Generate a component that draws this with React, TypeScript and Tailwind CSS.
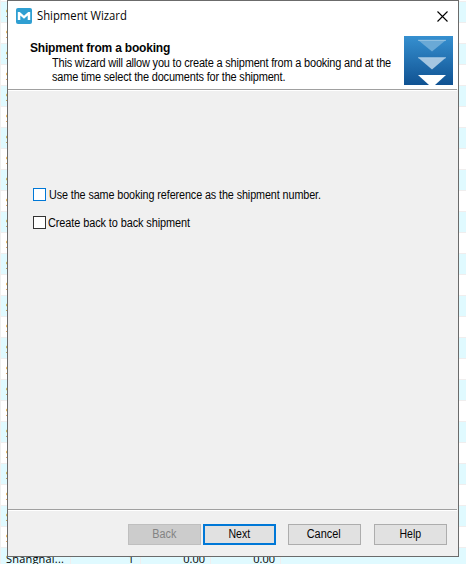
import React from "react";

const rows = Array.from({ length: 27 }, (_, i) => i);

function Grid() {
  return (
    <div className="flex h-[564px] w-[466px] flex-col overflow-hidden border-l border-[#f0f0f0] bg-white pt-px font-['Open_Sans','Noto_Sans',sans-serif] text-[11px] text-black">
      {rows.map((i) => (
        <div
          key={i}
          className={`flex h-[21px] shrink-0 border-t border-[#f0eeee] leading-[21px] ${i % 2 === 0 ? "bg-[#e0faff]" : "bg-white"}`}
        >
          <div className="w-[70px] shrink-0 border-r border-[#f0eeee] pl-[5px] tracking-[0.2px]">{i === 26 ? "Shanghai..." : "S"}</div>
          <div className="w-[70px] shrink-0 border-r border-[#f0eeee] pr-[6px] text-right">{i === 26 && "1"}</div>
          <div className="w-[70px] shrink-0 border-r border-[#f0eeee] pr-[5px] text-right">{i === 26 && "0.00"}</div>
          <div className="w-[70px] shrink-0 border-r border-[#f0eeee] pr-[5px] text-right">{i === 26 && "0.00"}</div>
        </div>
      ))}
    </div>
  );
}

function Separator() {
  return <div className="mr-px h-[2px] shrink-0 border-t border-[#a0a0a0] bg-white" />;
}

function Logo() {
  return (
    <svg width="16" height="16" viewBox="0 0 16 16" className="shrink-0">
      <rect width="16" height="16" rx="2" fill="#2f9fd2" />
      <path d="M1.8 12V4H3.8L8 7.7L12.2 4H14.2V12H11.7V7.6L8 10.8L4.3 7.6V12Z" fill="#fff" />
    </svg>
  );
}

function Banner() {
  return (
    <svg width="49" height="49" viewBox="0 0 49 49" className="shrink-0">
      <defs>
        <linearGradient id="banner" x1="0" y1="0" x2="0" y2="1">
          <stop offset="0" stopColor="#3690d0" />
          <stop offset="1" stopColor="#105292" />
        </linearGradient>
      </defs>
      <rect width="49" height="49" fill="url(#banner)" />
      <path d="M14 4H42L28 15.5Z" fill="#6aa9d6" />
      <path d="M14 21.5H42L28 33.5Z" fill="#a5c6e1" />
      <path d="M14 39H42L31 49H25Z" fill="#fff" />
      <path d="M14 4.3H42M14 21.8H42" stroke="#b9d6ec" strokeWidth="0.6" />
    </svg>
  );
}

export default function App() {
  return (
    <div className="relative h-[564px] w-[466px] overflow-hidden font-['Liberation_Sans',Arial,sans-serif] text-[12px] text-[#050505]">
      <Grid />
      <div className="absolute top-0 left-[7px] flex h-[557px] w-[452px] flex-col border border-[#6b6b6b] bg-[#f0f0f0]">
        <div className="flex h-[88px] shrink-0 flex-col bg-white">
          <div className="flex h-[30px] shrink-0 items-center pr-[10px] pl-2">
            <Logo />
            <span className="ml-[5px] flex-1 origin-left scale-x-[0.94] whitespace-nowrap font-['Open_Sans','Noto_Sans',sans-serif] text-[12px] leading-4">Shipment Wizard</span>
            <svg width="11" height="11" viewBox="0 0 11 11" stroke="#000" strokeWidth="1.1">
              <path d="M0.5 0.5L10.5 10.5M10.5 0.5L0.5 10.5" />
            </svg>
          </div>
          <div className="flex pt-[5px] pr-[5px] pl-[22px]">
            <div className="min-w-0 flex-1 pt-[5px] whitespace-nowrap">
              <h1 className="text-[12px] leading-[14px] font-bold">
                <span className="tracking-[-0.2px]">Shipment from a booking</span>
              </h1>
              <p className="mt-px ml-[22px] w-max origin-left scale-x-[0.914] leading-[14px] tracking-[-0.2px]">
                This wizard will allow you to create a shipment from a booking and at the
                <br />
                same time select the documents for the shipment.
              </p>
            </div>
            <Banner />
          </div>
        </div>
        <Separator />
        <div className="flex h-[418px] shrink-0 flex-col gap-[15px] pt-[97px] pl-[25px]">
          <label className="flex h-[13px] items-center">
            <span className="h-[13px] w-[13px] border border-[#0078d7] bg-white" />
            <span className="ml-[3px] origin-left scale-x-[0.898] tracking-[-0.1px] whitespace-nowrap">Use the same booking reference as the shipment number.</span>
          </label>
          <label className="flex h-[13px] items-center">
            <span className="h-[13px] w-[13px] border border-[#333333] bg-white" />
            <span className="ml-[2px] origin-left scale-x-[0.91] tracking-[-0.1px] whitespace-nowrap">Create back to back shipment</span>
          </label>
        </div>
        <Separator />
        <div className="flex pt-[13px] pl-[120px]">
          <button className="h-[21px] w-[73px] border border-[#bfbfbf] bg-[#cccccc] pr-px leading-[19px] text-[#838383]">
            <span className="inline-block scale-x-[0.9]">Back</span>
          </button>
          <button className="ml-[2px] h-[21px] w-[73px] border-2 border-[#0078d7] bg-[#e1e1e1] pr-px leading-[17px]">
            <span className="inline-block scale-x-[0.88]">Next</span>
          </button>
          <button className="ml-[12px] h-[21px] w-[73px] border border-[#adadad] bg-[#e1e1e1] pr-[2px] leading-[19px]">
            <span className="inline-block scale-x-[0.91]">Cancel</span>
          </button>
          <button className="ml-[13px] h-[21px] w-[73px] border border-[#adadad] bg-[#e1e1e1] pr-px leading-[19px]">
            <span className="inline-block scale-x-[0.88]">Help</span>
          </button>
        </div>
      </div>
    </div>
  );
}
